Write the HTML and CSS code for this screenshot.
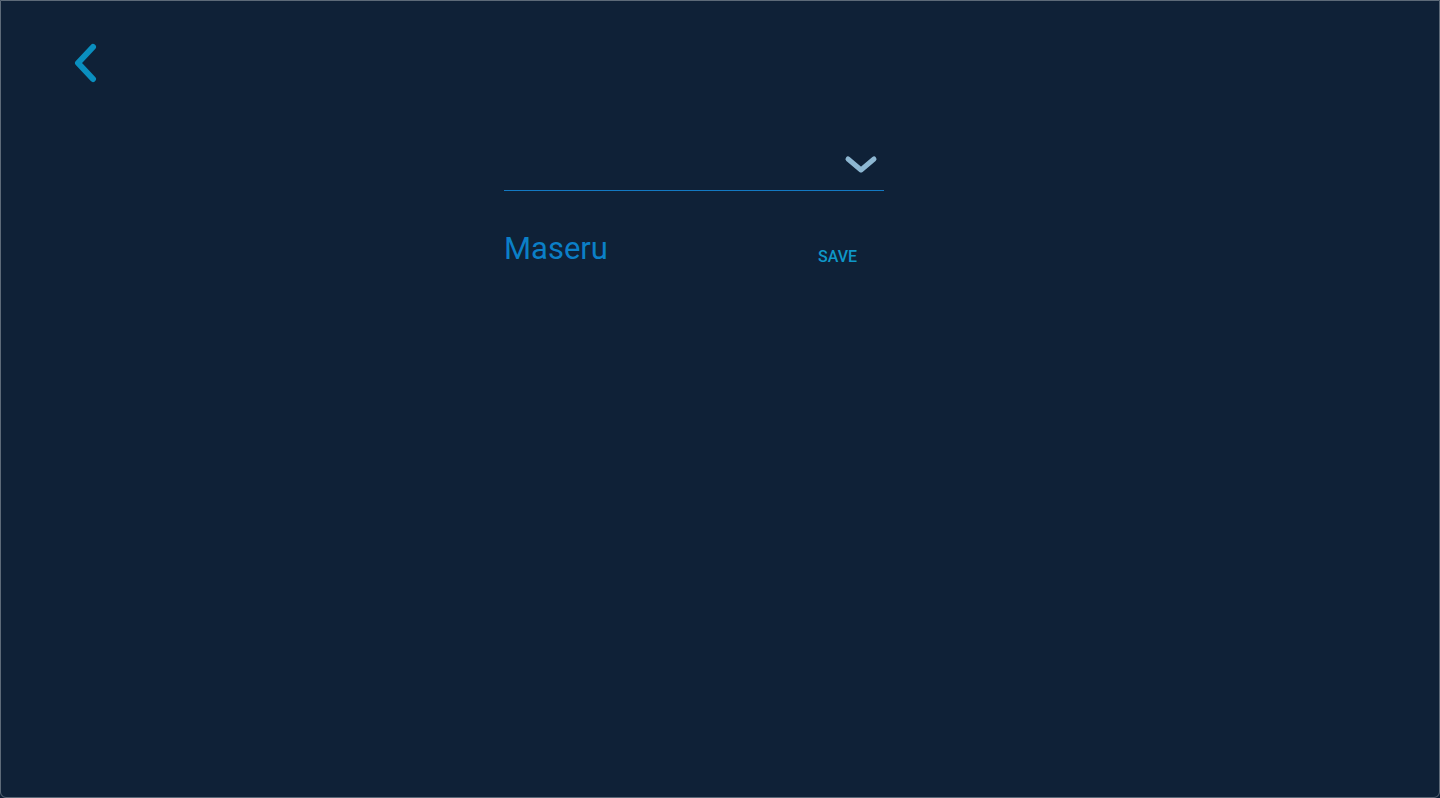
FILE: index.html
```html
<!DOCTYPE html>
<html>
<head>
<meta charset="utf-8">
<link rel="stylesheet" href="styles.css">
</head>
<body>
<div class="screen">
  <header class="top">
    <button class="back" aria-label="Back">
      <svg width="30" height="40" viewBox="0 0 30 40"><path d="M25 4 L10 20 L25 36" fill="none" stroke="#0a8fbf" stroke-width="6" stroke-linecap="round" stroke-linejoin="round"/></svg>
    </button>
  </header>
  <main class="content">
    <div class="select">
      <span class="select-value"></span>
      <svg class="caret" width="34" height="22" viewBox="0 0 34 22"><path d="M4 5 L17 16 L30 5" fill="none" stroke="#8db7d2" stroke-width="5" stroke-linecap="round" stroke-linejoin="round"/></svg>
    </div>
    <div class="row">
      <span class="city">Maseru</span>
      <button class="save">SAVE</button>
    </div>
  </main>
</div>
</body>
</html>
```
FILE: styles.css
```css
html, body {
  margin: 0;
  padding: 0;
  background: #0f2137;
}
body {
  font-family: Roboto, "Noto Sans", sans-serif;
}
.screen {
  box-sizing: border-box;
  width: 1440px;
  height: 798px;
  border: 1px solid #5d6a78;
  border-radius: 0 0 6px 6px;
  background: #0f2137;
  display: flex;
  flex-direction: column;
}
.top {
  height: 100px;
  padding: 42px 0 0 67px;
  box-sizing: border-box;
}
.back {
  background: none;
  border: 0;
  padding: 0;
  margin: 0;
  display: block;
  cursor: pointer;
}
.content {
  width: 380px;
  margin-left: 503px;
  margin-top: 40px;
}
.select {
  height: 50px;
  border-bottom: 1px solid #1379c2;
  display: flex;
  justify-content: flex-end;
  align-items: flex-start;
  padding-right: 6px;
  box-sizing: border-box;
}
.caret {
  margin-top: 13px;
  display: block;
}
.row {
  display: flex;
  align-items: center;
  margin-top: 40px;
  width: 353px;
  justify-content: space-between;
}
.city {
  color: #0b7fc7;
  font-size: 31px;
  line-height: 36px;
}
.save {
  background: none;
  border: 0;
  padding: 0;
  margin-top: 14px;
  color: #0e97c7;
  font-family: Roboto, sans-serif;
  font-weight: 500;
  font-size: 16px;
  letter-spacing: 0;
}
```
